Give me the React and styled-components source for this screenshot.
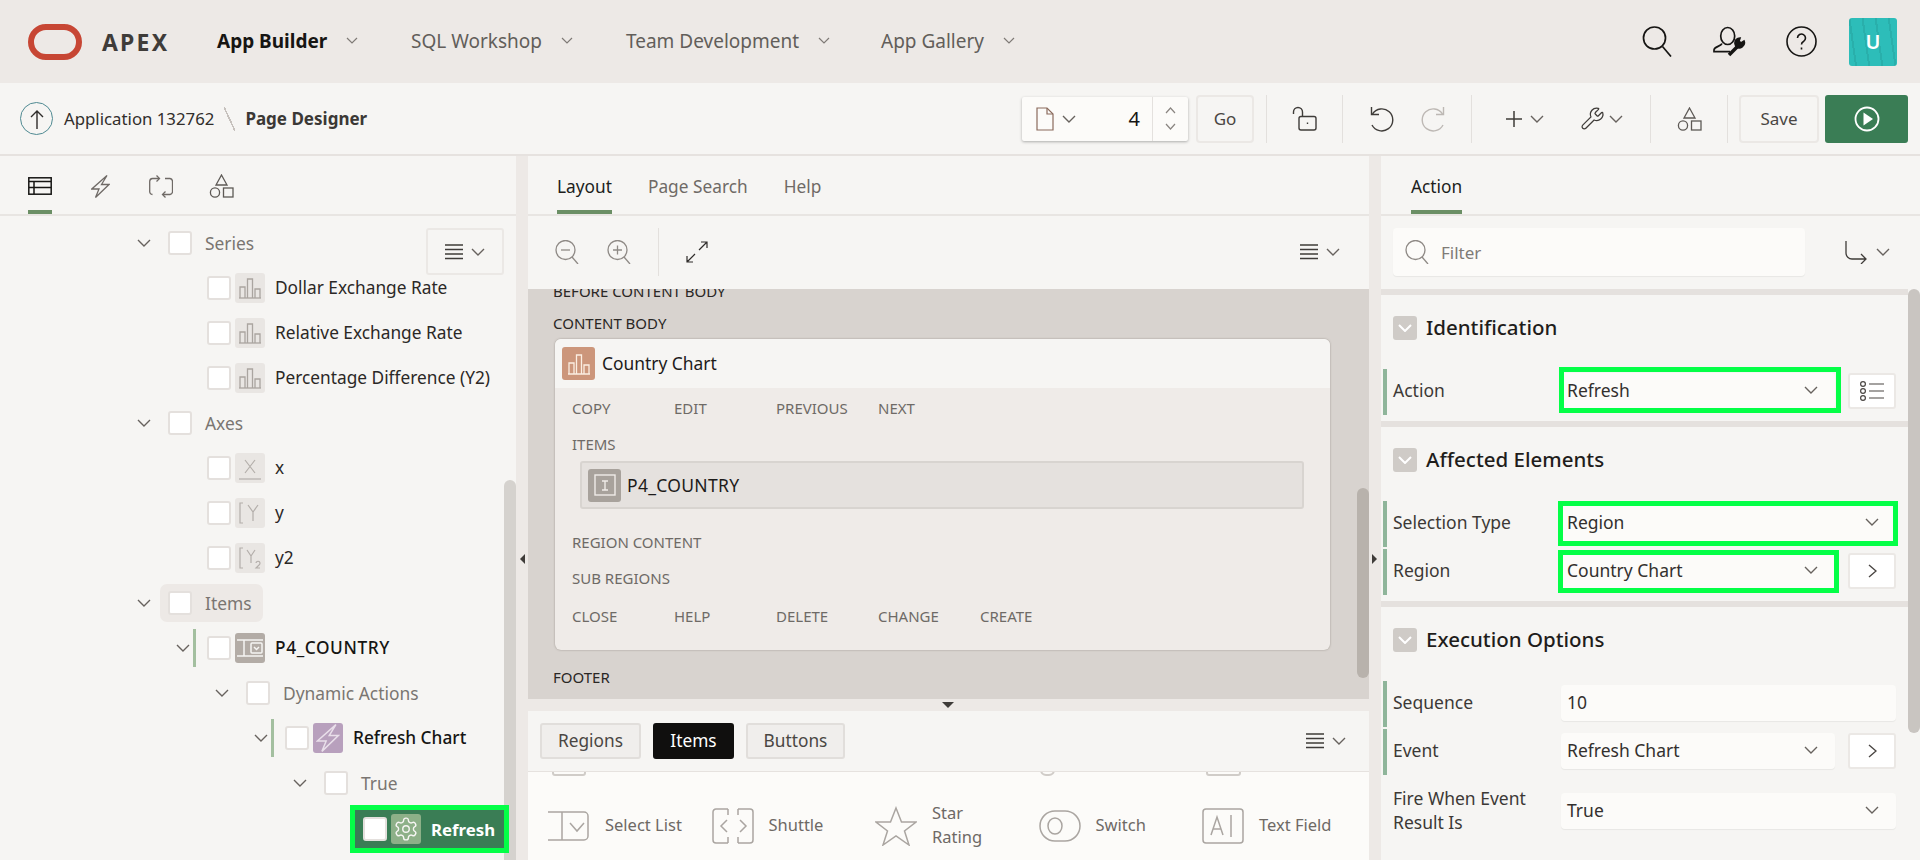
import React from "react";
import styled, { createGlobalStyle } from "styled-components";

const Global = createGlobalStyle`
  html, body { margin: 0; padding: 0; background: #f6f5f3; height: 860px; overflow: hidden; }
  * { box-sizing: border-box; }
  body { font-family: "Noto Sans", "Open Sans", Arial, sans-serif; color: #1d1b1a; font-size: 17px; }
`;

const Page = styled.div`
  width: 1920px; height: 860px; overflow: hidden;
  display: grid; grid-template-rows: 83px 73px 704px;
`;

/* ---------- glyphs ---------- */
const Glyph = styled.svg.attrs(p => ({ viewBox: p.$vb || `0 0 ${p.$w} ${p.$h}` }))`
  width: ${p => p.$w}px; height: ${p => p.$h}px; flex: none; display: block;
  fill: none; stroke: ${p => p.$c || "currentColor"}; stroke-width: ${p => p.$sw || 1.4};
`;
const Chevron = ({ w = 14, h = 8, c = "#67625e", sw = 1.4 }) => (
  <Glyph $w={w} $h={h} $c={c} $sw={sw}><polyline points={`1,1 ${w / 2},${h - 1} ${w - 1},1`} /></Glyph>
);
const Lines = () => (
  <Glyph $w={18} $h={16}><path d="M0 1h18M0 5.5h18M0 10h18M0 14.5h18" stroke="#3f3c39" /></Glyph>
);
const Shapes = () => (
  <Glyph $w={25} $h={24} $c="#5d5955" $sw={1.3}>
    <path d="M12.5 1 L18 11 H7 Z" /><circle cx="6" cy="18.5" r="4.6" /><rect x="14.5" y="14" width="9.5" height="9" />
  </Glyph>
);
const Lens = ({ size = 24, c = "#8f8a86", kind }) => (
  <Glyph $w={size} $h={size} $vb="0 0 24 24" $c={c} $sw={1.3}>
    <circle cx="10.5" cy="10" r="9.5" /><path d="M17 17l6 7" />
    {kind === "minus" && <path d="M6 10h9" />}
    {kind === "plus" && <path d="M6 10h9M10.5 5.5v9" />}
  </Glyph>
);
const BarsIcon = ({ c = "#aaa5a0", w = 24 }) => (
  <Glyph $w={w} $h={w} $vb="0 0 24 24" $c={c} $sw={1.3}>
    <path d="M1 22h22" /><path d="M2 22V11h5v11M9.5 22V3h5v19M17 22V13h5v9" />
  </Glyph>
);
const GearIcon = () => (
  <Glyph $w={26} $h={26} $vb="0 0 24 24" $c="#f6f5f3" $sw={1.3}>
    <path d="M12.22 2h-.44a2 2 0 0 0-2 2v.18a2 2 0 0 1-1 1.73l-.43.25a2 2 0 0 1-2 0l-.15-.08a2 2 0 0 0-2.73.73l-.22.38a2 2 0 0 0 .73 2.73l.15.1a2 2 0 0 1 1 1.72v.51a2 2 0 0 1-1 1.74l-.15.09a2 2 0 0 0-.73 2.73l.22.38a2 2 0 0 0 2.73.73l.15-.08a2 2 0 0 1 2 0l.43.25a2 2 0 0 1 1 1.73V20a2 2 0 0 0 2 2h.44a2 2 0 0 0 2-2v-.18a2 2 0 0 1 1-1.73l.43-.25a2 2 0 0 1 2 0l.15.08a2 2 0 0 0 2.73-.73l.22-.39a2 2 0 0 0-.73-2.73l-.15-.08a2 2 0 0 1-1-1.74v-.5a2 2 0 0 1 1-1.74l.15-.09a2 2 0 0 0 .73-2.73l-.22-.38a2 2 0 0 0-2.73-.73l-.15.08a2 2 0 0 1-2 0l-.43-.25a2 2 0 0 1-1-1.73V4a2 2 0 0 0-2-2z" />
    <circle cx="12" cy="12" r="3" />
  </Glyph>
);
const BoltIcon = ({ c, w = 19, h = 23, sw = 1.3 }) => (
  <Glyph $w={w} $h={h} $vb="0 0 19 23" $c={c} $sw={sw}>
    <path d="M16 .5 L.8 14 H8 L4.5 22.5 L18 9.5 H10.5 Z" />
  </Glyph>
);

/* ---------- top bar ---------- */
const TopBar = styled.header`
  background: #ede9e6; display: flex; align-items: center; padding-left: 28px;
`;
const Brand = styled.span`
  font-weight: 700; font-size: 23px; letter-spacing: 2.2px; color: #3f3c39; margin: 0 49px 0 20px; width: 66px;
`;
const NavItem = styled.div`
  width: ${p => p.$w}px; display: flex; align-items: center; gap: 19px; font-size: 19px; padding-bottom: 2px;
  font-weight: ${p => (p.$on ? 700 : 400)}; color: ${p => (p.$on ? "#161513" : "#625e5a")};
`;
const TopIcons = styled.div`
  margin-left: auto; padding-right: 23px; display: flex; align-items: center;
`;
const TopIcon = styled.div`
  width: 72px; display: flex; justify-content: center; color: #161513;
`;
const Avatar = styled.div`
  width: 48px; height: 48px; margin-left: 12px; border-radius: 3px; color: #fff; font-weight: 600; font-size: 20px;
  display: flex; align-items: center; justify-content: center;
  background: repeating-linear-gradient(82deg, #2dbdb9 0 6px, #29afab 6px 8px, #2dbdb9 8px 13px);
`;

/* ---------- toolbar ---------- */
const ToolBar = styled.div`
  display: flex; align-items: center; padding: 0 12px 0 20px; border-bottom: 2px solid #e6e2df; background: #f6f5f3;
`;
const UpCircle = styled.div`
  width: 33px; height: 33px; border-radius: 50%; border: 1.5px solid #4f8a92; display: flex; align-items: center; justify-content: center;
`;
const Crumb = styled.span`
  font-size: 16.8px; margin-left: 11px; color: #312e2b;
`;
const CrumbCurrent = styled.span`
  font-size: 17px; font-weight: 700; color: #3b3835;
`;
const CrumbSlash = styled.span`
  width: 11px; height: 24px; margin: 0 10px; background: linear-gradient(to top right, transparent 46%, #c6c1bd 46% 54%, transparent 54%);
`;
const ToolRight = styled.div`
  margin-left: auto; display: flex; align-items: center;
`;
const PageBox = styled.div`
  width: 166px; height: 44px; margin-right: 8px; background: #fcfbf9; display: flex; border-radius: 2px;
  box-shadow: 0 1px 3px rgba(0,0,0,.3);
`;
const PageMain = styled.div`
  flex: 1; display: flex; align-items: center; padding: 0 12px 0 14px; gap: 8px;
`;
const PageNum = styled.span`
  margin-left: auto; font-size: 20px; color: #161513;
`;
const PageSpin = styled.div`
  width: 36px; border-left: 1px solid #e4e1de; display: flex; flex-direction: column; align-items: center; justify-content: space-around; padding: 6px 0;
`;
const Flip = styled.span`
  display: block; transform: rotate(180deg);
`;
const Btn = styled.div`
  width: ${p => p.$w}px; height: 48px; display: flex; align-items: center; justify-content: center;
  border: 2px solid #ebe8e5; border-radius: 4px; color: #4a4643; font-size: 17px;
`;
const RunBtn = styled.div`
  width: 83px; height: 48px; margin-left: 6px; background: #3a7d55; border-radius: 3px; display: flex; align-items: center; justify-content: center;
`;
const Sep = styled.i`
  width: 1px; height: 48px; background: #e3e0dd; display: block; flex: none;
  margin-left: ${p => p.$ml || 0}px; margin-right: ${p => p.$mr || 0}px;
`;
const ToolSlot = styled.div`
  width: ${p => p.$w}px; display: flex; align-items: center; gap: ${p => p.$gap || 0}px;
  justify-content: ${p => (p.$pl ? "flex-start" : "center")}; padding-left: ${p => p.$pl || 0}px;
`;

/* ---------- body ---------- */
const Main = styled.div`
  display: grid; grid-template-columns: 516px 12px 841px 12px 539px; height: 704px;
`;
const Panel = styled.section`
  position: relative; display: flex; flex-direction: column; overflow: hidden; background: #f6f5f3;
`;
const Gutter = styled.div`
  position: relative; background: #ede9e6;
`;
const Tri = styled.i`
  position: absolute; top: 398px; left: ${p => (p.$dir === "left" ? 4 : 3)}px; width: 0; height: 0;
  border-top: 5px solid transparent; border-bottom: 5px solid transparent;
  ${p => (p.$dir === "left" ? "border-right: 5px solid #3f3c39;" : "border-left: 5px solid #3f3c39;")}
`;
const Tabs = styled.nav`
  height: 60px; flex: none; display: flex; gap: ${p => p.$gap ?? 36}px; padding-left: ${p => p.$pl}px; border-bottom: 2px solid #e8e5e2;
`;
const Tab = styled.div`
  height: 58px; padding-top: 6px; display: flex; align-items: center; justify-content: center; font-size: 17.3px;
  color: ${p => (p.$on ? "#201e1c" : "#6f6a66")};
  margin-right: ${p => p.$mr || 0}px;
  border-bottom: 4px solid ${p => (p.$on ? "#6b8f65" : "transparent")};
`;

/* ---------- tree ---------- */
const Tree = styled.div`
  padding-top: 4px; flex: 1; overflow: hidden;
`;
const Row = styled.div`
  height: 45px; display: flex; align-items: center; padding-left: ${p => p.$x}px;
`;
const Toggle = styled.div`
  width: 31px; display: flex; align-items: center; flex: none;
`;
const NodeBar = styled.i`
  width: 3px; height: 38px; margin-left: 3px; background: #a3bf9f; display: block;
`;
const Check = styled.span`
  width: 24px; height: 24px; flex: none; background: #fff; border: 2px solid #e4e0dd; border-radius: 3px; display: block;
`;
const NodeIcon = styled.span`
  width: 30px; height: 30px; margin-left: 4px; flex: none; border-radius: 3px; display: flex; align-items: center; justify-content: center;
  background: ${p => p.$bg || "#e9e6e3"};
`;
const NodeText = styled.span`
  margin-left: 10px; font-size: ${p => p.$s || 17.3}px; white-space: nowrap; letter-spacing: ${p => p.$ls || 0}px;
  color: ${p => p.$c || "#2b2826"}; font-weight: ${p => p.$w || 400};
`;
const GroupText = styled.span`
  margin-left: 13px; font-size: 17.4px; color: #7a7571; white-space: nowrap;
`;
const GroupWrap = styled.div`
  display: flex; align-items: center; height: 38px; margin-left: ${p => (p.$hot ? -8 : 0)}px; padding: 0 ${p => (p.$hot ? 11 : 0)}px 0 ${p => (p.$hot ? 8 : 0)}px;
  background: ${p => (p.$hot ? "#ede9e6" : "transparent")}; border-radius: 7px;
`;
const Selected = styled.div`
  position: relative; z-index: 1;
  margin-left: 350px; width: 159px; height: 48px; border: 5px solid #04ff47; background: #3a7d55; display: flex; align-items: center; padding-left: 8px;
`;
const FloatBtn = styled.div`
  position: absolute; top: 72px; left: 426px; width: 78px; height: 47px; border: 2px solid #ebe8e5; border-radius: 3px; background: #f6f5f3;
  display: flex; align-items: center; justify-content: center; gap: 8px;
`;
const Scroll = styled.i`
  position: absolute; display: block; width: 12px; top: ${p => p.$top}px; height: ${p => p.$h}px; right: 0;
  background: ${p => p.$c}; border-radius: 6px 6px ${p => (p.$flat ? "0 0" : "6px 6px")};
`;

/* ---------- centre ---------- */
const Tools = styled.div`
  height: 73px; flex: none; display: flex; align-items: center; padding: 0 29px 1px 27px;
`;
const MenuBtn = styled.div`
  margin-left: auto; display: flex; align-items: center; gap: 8px;
`;
const Canvas = styled.div`
  position: relative; height: 410px; flex: none; background: #d8d3cf; overflow: hidden; padding-left: 25px;
`;
const CanvasLabel = styled.div`
  font-size: 15px; line-height: 18px; padding-bottom: 2px; color: #2a2725; margin-top: ${p => p.$mt}px;
`;
const Card = styled.div`
  width: 775px; height: 311px; margin: 5px 0 0 2px; background: #efebe8; border-radius: 6px; overflow: hidden;
  box-shadow: 0 0 2px rgba(90,80,70,.5);
`;
const CardHead = styled.div`
  height: 49px; background: #f6f5f3; display: flex; align-items: center; padding-left: 7px; gap: 7px; font-size: 17.4px;
`;
const RaisedText = styled.span`
  padding-bottom: 2px;
`;
const SquareIcon = styled.span`
  width: 33px; height: 33px; border-radius: 3px; background: ${p => p.$bg}; display: flex; align-items: center; justify-content: center; flex: none;
`;
const CardBody = styled.div`
  padding: 0 0 0 17px;
`;
const Slots = styled.div`
  display: grid; grid-template-columns: repeat(5, 102px); margin-top: ${p => p.$mt}px;
`;
const SlotLabel = styled.div`
  font-size: 15px; line-height: 18px; padding-bottom: 2px; color: #6e6a66; margin-top: ${p => p.$mt || 0}px;
`;
const ItemBar = styled.div`
  width: 724px; height: 48px; margin: 6px 0 0 8px; background: #e5e1de; border: 2px solid #d8d4d0; border-radius: 3px;
  display: flex; align-items: center; padding-left: 6px; gap: 6px; font-size: 17.5px; letter-spacing: .3px;
`;
const BottomBar = styled.div`
  height: 61px; flex: none; display: flex; align-items: center; gap: 12px; padding: 0 23px 0 12px; border-bottom: 1px solid #e6e2df;
`;
const TabBtn = styled.div`
  width: ${p => p.$w}px; height: 36px; display: flex; align-items: center; justify-content: center; border-radius: 3px; font-size: 17.3px; padding-bottom: 2px;
  background: ${p => (p.$on ? "#100f0e" : "#f0eeec")}; color: ${p => (p.$on ? "#fff" : "#4a4643")};
  border: 2px solid ${p => (p.$on ? "#100f0e" : "#e1dedb")};
`;
const Gallery = styled.div`
  flex: 1; background: #fcfbf9; overflow: hidden;
`;
const GalleryGrid = styled.div`
  display: grid; grid-template-columns: repeat(5, 163.5px); padding: 0 0 0 20px; margin-top: 26px;
`;
const GalleryItem = styled.div`
  height: 48px; display: flex; align-items: center; gap: 15px; font-size: 16.5px; color: #6e6965; line-height: 24px;
`;
const GalleryIcon = styled.div`
  width: 42px; display: flex; justify-content: center; flex: none;
`;
const GalleryText = styled.span`
  padding-bottom: 2px; max-width: ${p => p.$max || "none"};
`;
const Clipped = styled.div`
  height: 4px; position: relative;
`;
const ClipBox = styled.i`
  position: absolute; top: -8px; display: block; left: ${p => p.$x}px; width: ${p => p.$w}px; height: 12px;
  border: 2px solid #d0ccc8; border-radius: ${p => p.$r || 3}px;
`;
const Gap = styled.div`
  position: relative; height: 12px; background: #ede9e6; flex: none;
`;
const DownTri = styled.i`
  position: absolute; left: 414px; top: 3px; width: 0; height: 0;
  border-left: 6px solid transparent; border-right: 6px solid transparent; border-top: 6px solid #3f3c39;
`;

/* ---------- properties ---------- */
const FilterRow = styled.div`
  height: 73px; flex: none; display: flex; align-items: center; padding: 0 30px 1px 12px;
`;
const FilterBox = styled.div`
  width: 412px; height: 48px; background: #fcfbf9; border-radius: 4px; display: flex; align-items: center; padding-left: 12px; gap: 12px;
  color: #7f7b77; font-size: 17px; box-shadow: 0 1px 1px rgba(0,0,0,.06);
`;
const Props = styled.div`
  width: 527px;
`;
const Section = styled.div`
  border-top: 6px solid #e5e1de; padding-bottom: 6px;
`;
const SectionHead = styled.div`
  height: 66px; display: flex; align-items: center; padding-left: 12px; gap: 9px; font-size: 20.5px; font-weight: 500; color: #1f1d1b;
`;
const Collapse = styled.span`
  width: 24px; height: 24px; border-radius: 3px; background: #cfcbc7; display: flex; align-items: center; justify-content: center;
`;
const PropRows = styled.div`
  margin: 8px 0 0 2px; display: grid; gap: 2px;
`;
const PropRow = styled.div`
  min-height: ${p => p.$h || 46}px; display: grid; grid-template-columns: 168px 335px; align-items: center;
  border-left: 4px solid ${p => (p.$mark ? "#8fb59a" : "transparent")}; padding: 0 0 2px 6px;
  font-size: 17.5px; color: #3c3936; line-height: 24px;
`;
const PropLabel = styled.span`
  padding-bottom: 2px;
`;
const Fields = styled.div`
  display: flex; gap: 13px;
`;
const Field = styled.div`
  position: relative; height: 36px; flex: 1; background: #fcfbf9; border-radius: 4px; display: flex; align-items: center; justify-content: space-between;
  padding: 0 17px 2px 6px; color: #33302e; font-size: 17.5px; box-shadow: 0 1px 1px rgba(0,0,0,.06);
`;
const Outline = styled.i`
  position: absolute; inset: ${p => p.$inset}; border: 5px solid #04ff47; display: block; pointer-events: none;
`;
const SideBtn = styled.div`
  width: 48px; height: 36px; flex: none; background: #fff; border: 2px solid #ebe8e5; border-radius: 3px; display: flex; align-items: center; justify-content: center;
`;

const Selection = ({ label, outline }) => (
  <Field>
    {label}
    <Chevron />
    {outline && <Outline $inset={outline} />}
  </Field>
);
const NextBtn = () => (
  <SideBtn>
    <Glyph $w={9} $h={14} $c="#4a4643"><polyline points="1,1 8,7 1,13" /></Glyph>
  </SideBtn>
);
const Node = ({ x, bar, children }) => (
  <Row $x={x}>
    <Toggle>
      <Chevron />
      {bar && <NodeBar />}
    </Toggle>
    {children}
  </Row>
);
const Group = ({ x, label, hot }) => (
  <Node x={x}>
    <GroupWrap $hot={hot}>
      <Check />
      <GroupText>{label}</GroupText>
    </GroupWrap>
  </Node>
);
const Leaf = ({ x, icon, label }) => (
  <Row $x={x}>
    <Check />
    <NodeIcon>{icon}</NodeIcon>
    <NodeText>{label}</NodeText>
  </Row>
);
const AxisIcon = ({ kind }) => (
  <Glyph $w={26} $h={26} $c="#b3aeaa" $sw={1.2}>
    {kind === "x" && <><path d="M8 5l10 13M18 5L8 18" /><path d="M2 24h22" /></>}
    {kind === "y" && <><path d="M6 3H3v20h3" /><path d="M11 5l5 7 5-7M16 12v9" /></>}
    {kind === "y2" && <><path d="M6 3H3v20h3" /><path d="M10 5l4 6 4-6M14 11v7" /><path d="M19 18a2 2 0 1 1 3 2l-3 3h4" /></>}
  </Glyph>
);
const SectionHeader = ({ children }) => (
  <SectionHead>
    <Collapse><Chevron c="#fff" sw={2} /></Collapse>
    <RaisedText>{children}</RaisedText>
  </SectionHead>
);

export default function App() {
  return (
    <Page>
      <Global />
      <TopBar>
        <Glyph $w={54} $h={36} $c="#c74634" $sw={6}><rect x="3" y="3" width="48" height="30" rx="15" /></Glyph>
        <Brand>APEX</Brand>
        <NavItem $w={194} $on>App Builder <Chevron w={12} h={7} c="#7f7a76" sw={1.2} /></NavItem>
        <NavItem $w={215}>SQL Workshop <Chevron w={12} h={7} c="#7f7a76" sw={1.2} /></NavItem>
        <NavItem $w={255}>Team Development <Chevron w={12} h={7} c="#7f7a76" sw={1.2} /></NavItem>
        <NavItem $w={140}>App Gallery <Chevron w={12} h={7} c="#7f7a76" sw={1.2} /></NavItem>
        <TopIcons>
          <TopIcon>
            <Glyph $w={30} $h={31} $sw={1.7}><circle cx="12.5" cy="12" r="11" /><path d="M20.5 20.5l8.5 10" /></Glyph>
          </TopIcon>
          <TopIcon>
            <Glyph $w={33} $h={31} $sw={1.7}>
              <ellipse cx="14.7" cy="10" rx="7" ry="8.5" />
              <path d="M9 17.5c-1 3-8 3-8 6.5v1.700h16" />
              <path d="M16 29l9-9" strokeWidth="3.5" />
              <path d="M31 15a5 5 0 0 1-8 5.5l-1-3a5 5 0 0 1 5-5.5l-1 3 2 2z" fill="#161513" />
            </Glyph>
          </TopIcon>
          <TopIcon>
            <Glyph $w={31} $h={31} $sw={1.6}>
              <circle cx="15.5" cy="15.5" r="14.5" />
              <path d="M11.5 12a4 4 0 1 1 6 3.5c-1.5.8-2 1.5-2 3" />
              <path d="M15.5 21.5v2" />
            </Glyph>
          </TopIcon>
          <Avatar>U</Avatar>
        </TopIcons>
      </TopBar>

      <ToolBar>
        <UpCircle>
          <Glyph $w={14} $h={20} $c="#2f2c2a" $sw={1.4}><path d="M7 20V2M1 8l6-6 6 6" /></Glyph>
        </UpCircle>
        <Crumb>Application 132762</Crumb>
        <CrumbSlash />
        <CrumbCurrent>Page Designer</CrumbCurrent>
        <ToolRight>
          <PageBox>
            <PageMain>
              <Glyph $w={18} $h={24} $c="#8a6a5c" $sw={1.2}><path d="M1 1h10l6 6v16H1z" /><path d="M11 1v6h6" /></Glyph>
              <Chevron />
              <PageNum>4</PageNum>
            </PageMain>
            <PageSpin>
              <Flip><Chevron w={11} h={7} c="#8a8581" sw={1.2} /></Flip>
              <Chevron w={11} h={7} c="#8a8581" sw={1.2} />
            </PageSpin>
          </PageBox>
          <Btn $w={58}>Go</Btn>
          <Sep $ml={12} />
          <ToolSlot $w={75}>
            <Glyph $w={25} $h={25} $c="#3f3c39" $sw={1.4}>
              <path d="M1.5 8V6a4.5 4.5 0 0 1 9 0v4.5" /><rect x="7" y="10.5" width="17" height="13.5" rx="2" /><path d="M15.5 16.5v1.5" />
            </Glyph>
          </ToolSlot>
          <Sep />
          <ToolSlot $w={128} $gap={27}>
            <Glyph $w={25} $h={26} $c="#3f3c39" $sw={1.4}><path d="M3.5 8A11 11 0 1 1 3 19" /><path d="M2.5 1v7.5h7.5" /></Glyph>
            <Glyph $w={25} $h={26} $c="#bdb8b4" $sw={1.4}><path d="M21.5 8A11 11 0 1 0 22 19" /><path d="M22.5 1v7.5H15" /></Glyph>
          </ToolSlot>
          <Sep />
          <ToolSlot $w={178} $gap={34} $pl={33}>
            <ToolSlot $w={40} $gap={8}>
              <Glyph $w={16} $h={16} $c="#3f3c39" $sw={1.5}><path d="M8 0v16M0 8h16" /></Glyph>
              <Chevron />
            </ToolSlot>
            <ToolSlot $w={44} $gap={4}>
              <Glyph $w={25} $h={25} $vb="0 0 24 24" $c="#3f3c39" $sw={1.2}>
                <path d="M14.7 6.3a1 1 0 0 0 0 1.4l1.6 1.6a1 1 0 0 0 1.4 0l3.106-3.105c.32-.322.863-.22.983.218a6 6 0 0 1-8.259 7.057l-7.91 7.91a1 1 0 0 1-2.999-3l7.91-7.91a6 6 0 0 1 7.057-8.259c.438.12.54.662.219.984z" />
              </Glyph>
              <Chevron />
            </ToolSlot>
          </ToolSlot>
          <Sep />
          <ToolSlot $w={76}><Shapes /></ToolSlot>
          <Sep $mr={11} />
          <Btn $w={80}>Save</Btn>
          <RunBtn>
            <Glyph $w={26} $h={26} $c="#fff" $sw={1.8}><circle cx="13" cy="13" r="11.5" /><path d="M9.5 6.5l9.5 6.5-9.5 6.5z" fill="#fff" stroke="none" /></Glyph>
          </RunBtn>
        </ToolRight>
      </ToolBar>

      <Main>
        <Panel>
          <Tabs $pl={28} $gap={39}>
            <Tab $on>
              <Glyph $w={24} $h={18} $c="#161513" $sw={1.5}><rect x=".8" y=".8" width="22.4" height="16.4" /><path d="M1 4.5h22M1 10.5h22M6 4.5v12.5" /></Glyph>
            </Tab>
            <Tab><BoltIcon c="#6f6a66" /></Tab>
            <Tab $mr={-3}>
              <Glyph $w={24} $h={23} $c="#6f6a66" $sw={1.3}>
                <path d="M10 3.5H3.5A3 3 0 0 0 .7 6.5V17a3 3 0 0 0 2.8 2.5" /><path d="M7.5.5l3 3-3 3" />
                <path d="M16 3.5h5a3 3 0 0 1 2.5 3V17a3 3 0 0 1-2.5 2.5H14" /><path d="M16.5 16.5l-3 3 3 3" />
              </Glyph>
            </Tab>
            <Tab><Shapes /></Tab>
          </Tabs>
          <Tree>
            <Group x={137} label="Series" />
            <Leaf x={207} icon={<BarsIcon />} label="Dollar Exchange Rate" />
            <Leaf x={207} icon={<BarsIcon />} label="Relative Exchange Rate" />
            <Leaf x={207} icon={<BarsIcon />} label="Percentage Difference (Y2)" />
            <Group x={137} label="Axes" />
            <Leaf x={207} icon={<AxisIcon kind="x" />} label="x" />
            <Leaf x={207} icon={<AxisIcon kind="y" />} label="y" />
            <Leaf x={207} icon={<AxisIcon kind="y2" />} label="y2" />
            <Group x={137} label="Items" hot />
            <Node x={176} bar>
              <Check />
              <NodeIcon $bg="#b3aca6">
                <Glyph $w={26} $h={20} $c="#f6f5f3" $sw={1.5}>
                  <path d="M0 2h26M0 18h26M7 2v16" /><rect x="14" y="5" width="11" height="10" rx="1" />
                  <path d="M17 9l2.5 2.5L22 9" />
                </Glyph>
              </NodeIcon>
              <NodeText $c="#161513" $w={500} $ls={0.6}>P4_COUNTRY</NodeText>
            </Node>
            <Group x={215} label="Dynamic Actions" />
            <Node x={254} bar>
              <Check />
              <NodeIcon $bg="#b8a0bd"><BoltIcon c="#e9dfea" w={24} h={28} sw={1.2} /></NodeIcon>
              <NodeText $c="#161513" $w={500}>Refresh Chart</NodeText>
            </Node>
            <Group x={293} label="True" />
            <Selected>
              <Check />
              <NodeIcon $bg="#8db088"><GearIcon /></NodeIcon>
              <NodeText $c="#fff" $w={700} $s={16.8}>Refresh</NodeText>
            </Selected>
          </Tree>
          <FloatBtn><Lines /><Chevron /></FloatBtn>
          <Scroll $top={324} $h={380} $c="#d5d2ce" $flat />
        </Panel>

        <Gutter><Tri $dir="left" /></Gutter>

        <Panel>
          <Tabs $pl={29}>
            <Tab $on>Layout</Tab>
            <Tab>Page Search</Tab>
            <Tab>Help</Tab>
          </Tabs>
          <Tools>
            <Lens kind="minus" />
            <ToolSlot $w={28} />
            <Lens kind="plus" />
            <ToolSlot $w={27} />
            <Sep />
            <ToolSlot $w={27} />
            <Glyph $w={22} $h={22} $c="#2f2c2a" $sw={1.2}><path d="M21 1L13 9M15 1h6v6M1 21l8-8M1 15v6h6" /></Glyph>
            <MenuBtn><Lines /><Chevron /></MenuBtn>
          </Tools>
          <Canvas>
            <CanvasLabel $mt={-7}>BEFORE CONTENT BODY</CanvasLabel>
            <CanvasLabel $mt={12}>CONTENT BODY</CanvasLabel>
            <Card>
              <CardHead>
                <SquareIcon $bg="#cc967b"><BarsIcon c="#fbeee2" /></SquareIcon>
                <RaisedText>Country Chart</RaisedText>
              </CardHead>
              <CardBody>
                <Slots $mt={11}>
                  <SlotLabel>COPY</SlotLabel><SlotLabel>EDIT</SlotLabel><SlotLabel>PREVIOUS</SlotLabel><SlotLabel>NEXT</SlotLabel>
                </Slots>
                <SlotLabel $mt={16}>ITEMS</SlotLabel>
                <ItemBar>
                  <SquareIcon $bg="#a8a29c">
                    <Glyph $w={24} $h={24} $c="#f0ece8" $sw={1.4}><rect x="2" y="2" width="20" height="20" /><path d="M9 8h6M12 8v9M9 17h6" /></Glyph>
                  </SquareIcon>
                  P4_COUNTRY
                </ItemBar>
                <SlotLabel $mt={24}>REGION CONTENT</SlotLabel>
                <SlotLabel $mt={16}>SUB REGIONS</SlotLabel>
                <Slots $mt={18}>
                  <SlotLabel>CLOSE</SlotLabel><SlotLabel>HELP</SlotLabel><SlotLabel>DELETE</SlotLabel><SlotLabel>CHANGE</SlotLabel><SlotLabel>CREATE</SlotLabel>
                </Slots>
              </CardBody>
            </Card>
            <CanvasLabel $mt={18}>FOOTER</CanvasLabel>
            <Scroll $top={199} $h={190} $c="#b8b2ac" />
          </Canvas>
          <Gap><DownTri /></Gap>
          <BottomBar>
            <TabBtn $w={101}>Regions</TabBtn>
            <TabBtn $w={81} $on>Items</TabBtn>
            <TabBtn $w={99}>Buttons</TabBtn>
            <MenuBtn><Lines /><Chevron /></MenuBtn>
          </BottomBar>
          <Gallery>
            <Clipped>
              <ClipBox $x={24} $w={34} />
              <ClipBox $x={512} $w={15} $r={8} />
              <ClipBox $x={678} $w={35} />
            </Clipped>
            <GalleryGrid>
              <GalleryItem>
                <GalleryIcon>
                  <Glyph $w={42} $h={32} $c="#aaa5a1" $sw={1.5}><path d="M0 2h36a4 4 0 0 1 4 4v20a4 4 0 0 1-4 4H0M14 2v28" /><path d="M22 13l7 8 7-8" /></Glyph>
                </GalleryIcon>
                <GalleryText>Select List</GalleryText>
              </GalleryItem>
              <GalleryItem>
                <GalleryIcon>
                  <Glyph $w={42} $h={36} $c="#aaa5a1" $sw={1.5}>
                    <path d="M16 1H4a3 3 0 0 0-3 3v28a3 3 0 0 0 3 3h12M26 1h12a3 3 0 0 1 3 3v28a3 3 0 0 1-3 3H26M16 1v6M16 29v6M26 1v6M26 29v6" />
                    <path d="M15 12l-6 6 6 6M28 12l6 6-6 6" />
                  </Glyph>
                </GalleryIcon>
                <GalleryText>Shuttle</GalleryText>
              </GalleryItem>
              <GalleryItem>
                <GalleryIcon>
                  <Glyph $w={42} $h={40} $c="#aaa5a1" $sw={1.5}><path d="M21 2l5.5 14H41L29.5 25l4.5 14-13-9-13 9 4.5-14L1 16h14.5z" /></Glyph>
                </GalleryIcon>
                <GalleryText $max="55px">Star Rating</GalleryText>
              </GalleryItem>
              <GalleryItem>
                <GalleryIcon>
                  <Glyph $w={42} $h={32} $c="#aaa5a1" $sw={1.5}><rect x="1" y="1" width="40" height="30" rx="15" /><ellipse cx="16" cy="16" rx="7" ry="8" /></Glyph>
                </GalleryIcon>
                <GalleryText>Switch</GalleryText>
              </GalleryItem>
              <GalleryItem>
                <GalleryIcon>
                  <Glyph $w={42} $h={36} $c="#aaa5a1" $sw={1.5}>
                    <rect x="1" y="1" width="40" height="34" rx="3" /><path d="M9 27l6-18 6 18M11 21h8M29 7v22" />
                  </Glyph>
                </GalleryIcon>
                <GalleryText>Text Field</GalleryText>
              </GalleryItem>
            </GalleryGrid>
          </Gallery>
        </Panel>

        <Gutter><Tri $dir="right" /></Gutter>

        <Panel>
          <Tabs $pl={30}><Tab $on>Action</Tab></Tabs>
          <FilterRow>
            <FilterBox><Lens />Filter</FilterBox>
            <MenuBtn>
              <Glyph $w={24} $h={24} $c="#3f3c39" $sw={1.3}><path d="M2 1v12a6 6 0 0 0 6 6h14M17 14l5 5-5 5" /></Glyph>
              <Chevron />
            </MenuBtn>
          </FilterRow>
          <Props>
            <Section>
              <SectionHeader>Identification</SectionHeader>
              <PropRows>
                <PropRow $mark>
                  <PropLabel>Action</PropLabel>
                  <Fields>
                    <Selection label="Refresh" outline="-6px -6px -4px -2px" />
                    <SideBtn>
                      <Glyph $w={24} $h={20} $c="#4a4643" $sw={1.2}>
                        <circle cx="3" cy="3" r="2.4" /><circle cx="3" cy="10" r="2.4" /><circle cx="3" cy="17" r="2.4" />
                        <path d="M9 3h15M9 10h15M9 17h15" />
                      </Glyph>
                    </SideBtn>
                  </Fields>
                </PropRow>
              </PropRows>
            </Section>
            <Section>
              <SectionHeader>Affected Elements</SectionHeader>
              <PropRows>
                <PropRow $mark>
                  <PropLabel>Selection Type</PropLabel>
                  <Fields><Selection label="Region" outline="-4px -2px -5px -3px" /></Fields>
                </PropRow>
                <PropRow $mark>
                  <PropLabel>Region</PropLabel>
                  <Fields><Selection label="Country Chart" outline="-3px -4px -4px -3px" /><NextBtn /></Fields>
                </PropRow>
              </PropRows>
            </Section>
            <Section>
              <SectionHeader>Execution Options</SectionHeader>
              <PropRows>
                <PropRow $mark>
                  <PropLabel>Sequence</PropLabel>
                  <Fields><Field>10</Field></Fields>
                </PropRow>
                <PropRow $mark>
                  <PropLabel>Event</PropLabel>
                  <Fields><Selection label="Refresh Chart" /><NextBtn /></Fields>
                </PropRow>
                <PropRow $h={70}>
                  <PropLabel>Fire When Event<br />Result Is</PropLabel>
                  <Fields><Selection label="True" /></Fields>
                </PropRow>
              </PropRows>
            </Section>
          </Props>
          <Scroll $top={133} $h={444} $c="#c9c5c1" />
        </Panel>
      </Main>
    </Page>
  );
}
